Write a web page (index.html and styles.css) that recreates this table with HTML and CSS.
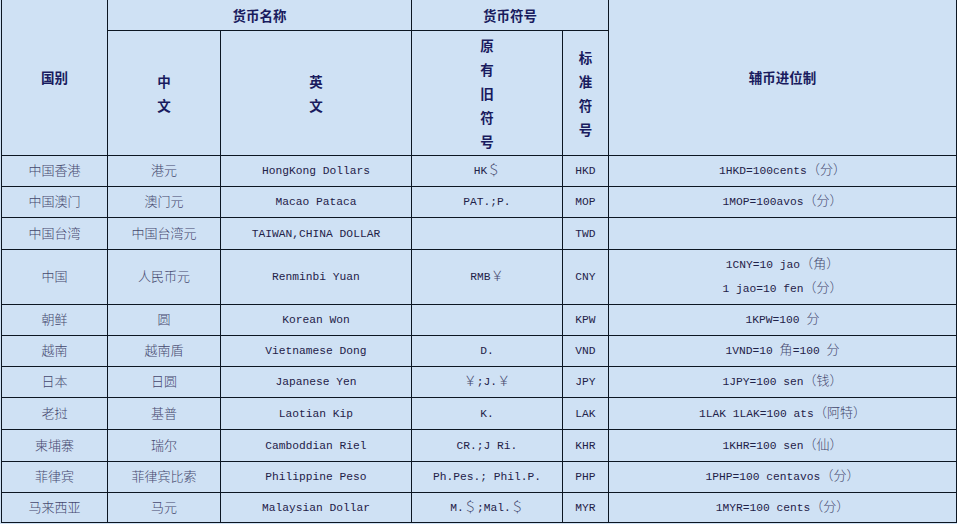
FILE: index.html
```html
<!DOCTYPE html>
<html lang="zh-CN">
<head>
<meta charset="utf-8">
<title>货币</title>
<link rel="stylesheet" href="styles.css">
</head>
<body>
<table class="cur">
  <colgroup>
    <col class="c1"><col class="c2"><col class="c3"><col class="c4"><col class="c5"><col class="c6">
  </colgroup>
  <thead>
    <tr class="h1">
      <th rowspan="2">国别</th>
      <th colspan="2">货币名称</th>
      <th colspan="2">货币符号</th>
      <th rowspan="2">辅币进位制</th>
    </tr>
    <tr class="h2">
      <th class="vt">中<br>文</th>
      <th class="vt">英<br>文</th>
      <th class="vt">原<br>有<br>旧<br>符<br>号</th>
      <th class="vt">标<br>准<br>符<br>号</th>
    </tr>
  </thead>
  <tbody>
    <tr class="r31"><td>中国香港</td><td>港元</td><td><span class="en">HongKong Dollars</span></td><td><span class="en">HK</span>＄</td><td><span class="en">HKD</span></td><td><span class="en">1HKD=100cents</span>（分）</td></tr>
    <tr class="r31"><td>中国澳门</td><td>澳门元</td><td><span class="en">Macao Pataca</span></td><td><span class="en">PAT.;P.</span></td><td><span class="en">MOP</span></td><td><span class="en">1MOP=100avos</span>（分）</td></tr>
    <tr class="r32"><td>中国台湾</td><td>中国台湾元</td><td><span class="en">TAIWAN,CHINA DOLLAR</span></td><td></td><td><span class="en">TWD</span></td><td></td></tr>
    <tr class="r55"><td>中国</td><td>人民币元</td><td><span class="en">Renminbi Yuan</span></td><td><span class="en">RMB</span>￥</td><td><span class="en">CNY</span></td><td class="two"><span class="en">1CNY=10 jao</span>（角）<br><span class="en">1 jao=10 fen</span>（分）</td></tr>
    <tr class="r31"><td>朝鲜</td><td>圆</td><td><span class="en">Korean Won</span></td><td></td><td><span class="en">KPW</span></td><td><span class="en">1KPW=100 </span>分</td></tr>
    <tr class="r31"><td>越南</td><td>越南盾</td><td><span class="en">Vietnamese Dong</span></td><td><span class="en">D.</span></td><td><span class="en">VND</span></td><td><span class="en">1VND=10 </span>角<span class="en">=100 </span>分</td></tr>
    <tr class="r31"><td>日本</td><td>日圆</td><td><span class="en">Japanese Yen</span></td><td>￥<span class="en">;J.</span>￥</td><td><span class="en">JPY</span></td><td><span class="en">1JPY=100 sen</span>（钱）</td></tr>
    <tr class="r32"><td>老挝</td><td>基普</td><td><span class="en">Laotian Kip</span></td><td><span class="en">K.</span></td><td><span class="en">LAK</span></td><td><span class="en">1LAK 1LAK=100 ats</span>（阿特）</td></tr>
    <tr class="r32"><td>柬埔寨</td><td>瑞尔</td><td><span class="en">Camboddian Riel</span></td><td><span class="en">CR.;J Ri.</span></td><td><span class="en">KHR</span></td><td><span class="en">1KHR=100 sen</span>（仙）</td></tr>
    <tr class="r31"><td>菲律宾</td><td>菲律宾比索</td><td><span class="en">Philippine Peso</span></td><td><span class="en">Ph.Pes.; Phil.P.</span></td><td><span class="en">PHP</span></td><td><span class="en">1PHP=100 centavos</span>（分）</td></tr>
    <tr class="r30"><td>马来西亚</td><td>马元</td><td><span class="en">Malaysian Dollar</span></td><td><span class="en">M.</span>＄<span class="en">;Mal.</span>＄</td><td><span class="en">MYR</span></td><td><span class="en">1MYR=100 cents</span>（分）</td></tr>
  </tbody>
</table>
</body>
</html>
```

FILE: styles.css
```css
html, body {
  margin: 0;
  padding: 0;
  background: #cfe1f4;
}

.cur {
  margin-left: 1px;
  width: 955px;
  table-layout: fixed;
  border-collapse: collapse;
  background: #cfe1f4;
  font-family: "Noto Sans CJK SC", sans-serif;
  font-size: 13px;
  font-weight: 300;
  color: #45486e;
}

.c1 { width: 106px; }
.c2 { width: 113px; }
.c3 { width: 191px; }
.c4 { width: 151px; }
.c5 { width: 46px; }
.c6 { width: 348px; }

.cur th,
.cur td {
  border: 1px solid #0c1622;
  padding: 0;
  text-align: center;
  vertical-align: middle;
  line-height: 16px;
}

.cur td {
  padding-bottom: 1px;
}

.cur tr:first-child th {
  border-top: none;
}

.cur th {
  font-weight: bold;
  color: #191b5e;
  font-size: 13.5px;
}

.h1 { height: 30px; }
.h2 { height: 125px; }
.cur th.vt { line-height: 24px; }

.r30 { height: 30px; }
.r31 { height: 31px; }
.r32 { height: 32px; }
.r55 { height: 55px; }

.cur td.two { line-height: 22px; }

.en {
  font-family: "Liberation Mono", monospace;
  font-size: 11.25px;
  font-weight: normal;
  color: #1f2249;
}
```
